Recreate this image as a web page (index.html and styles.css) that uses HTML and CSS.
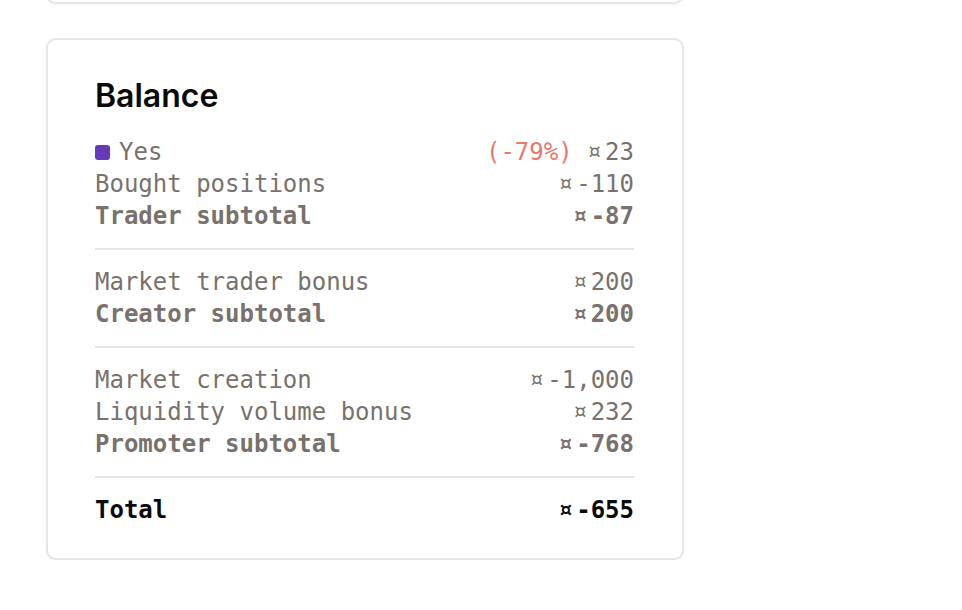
FILE: index.html
```html
<!DOCTYPE html>
<html lang="en">
<head>
<meta charset="utf-8">
<title>Balance</title>
<link rel="stylesheet" href="styles.css">
</head>
<body>
<div class="column">
  <div class="card card-prev"></div>
  <section class="card balance">
    <h2 class="title">Balance</h2>
    <div class="group">
      <div class="row">
        <span class="label"><span class="swatch"></span>Yes</span>
        <span class="value"><span class="change">(-79%)</span> <span class="coin">¤</span>23</span>
      </div>
      <div class="row">
        <span class="label">Bought positions</span>
        <span class="value"><span class="coin">¤</span>-110</span>
      </div>
      <div class="row strong">
        <span class="label">Trader subtotal</span>
        <span class="value"><span class="coin">¤</span>-87</span>
      </div>
    </div>
    <hr class="divider">
    <div class="group">
      <div class="row">
        <span class="label">Market trader bonus</span>
        <span class="value"><span class="coin">¤</span>200</span>
      </div>
      <div class="row strong">
        <span class="label">Creator subtotal</span>
        <span class="value"><span class="coin">¤</span>200</span>
      </div>
    </div>
    <hr class="divider">
    <div class="group">
      <div class="row">
        <span class="label">Market creation</span>
        <span class="value"><span class="coin">¤</span>-1,000</span>
      </div>
      <div class="row">
        <span class="label">Liquidity volume bonus</span>
        <span class="value"><span class="coin">¤</span>232</span>
      </div>
      <div class="row strong">
        <span class="label">Promoter subtotal</span>
        <span class="value"><span class="coin">¤</span>-768</span>
      </div>
    </div>
    <hr class="divider">
    <div class="group">
      <div class="row total">
        <span class="label">Total</span>
        <span class="value"><span class="coin">¤</span>-655</span>
      </div>
    </div>
  </section>
</div>
</body>
</html>
```
FILE: styles.css
```css
* { box-sizing: border-box; }

html, body {
  margin: 0;
  padding: 0;
  background: #ffffff;
}

body {
  font-family: "DejaVu Sans Mono", "Liberation Mono", monospace;
}

.column {
  width: 638px;
  margin-left: 46px;
  margin-top: -96px;
  display: flex;
  flex-direction: column;
  gap: 34px;
}

.card {
  background: #ffffff;
  border: 2px solid #e6e6e6;
  border-radius: 10px;
  box-shadow: 0 1px 3px rgba(0, 0, 0, 0.06);
}

.card-prev {
  height: 100px;
}

.balance {
  padding: 36px 48px 32px 47px;
}

.title {
  margin: 0 0 20px 0;
  font-family: Inter, "Noto Sans", sans-serif;
  font-size: 32px;
  line-height: 40px;
  font-weight: 600;
  color: #0a0a0a;
}

.group {
  display: flex;
  flex-direction: column;
}

.row {
  display: flex;
  justify-content: space-between;
  align-items: center;
  height: 32px;
  font-size: 24px;
  line-height: 32px;
  color: #78716c;
  white-space: pre;
}

.row.strong {
  font-weight: 700;
}

.row.total {
  font-weight: 700;
  color: #0a0a0a;
}

.label {
  display: flex;
  align-items: center;
}

.value {
  line-height: 32px;
}

.coin {
  display: inline-block;
  width: 18px;
  font-size: 24px;
  line-height: 1;
}

.swatch {
  width: 15px;
  height: 15px;
  border-radius: 3px;
  background: #673ab7;
  margin-right: 9px;
}

.change {
  color: #ec7670;
}

.divider {
  margin: 16px 0;
  border: 0;
  border-top: 2px solid #e6e6e6;
  height: 0;
}
```
